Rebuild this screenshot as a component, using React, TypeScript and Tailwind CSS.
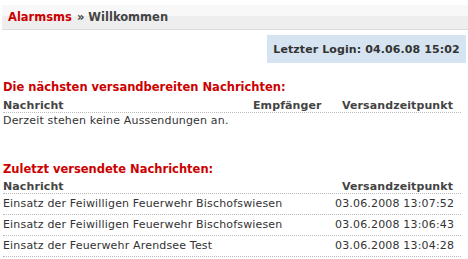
export default function App() {
  const sent = [
    { text: "Einsatz der Feiwilligen Feuerwehr Bischofswiesen", time: "03.06.2008 13:07:52" },
    { text: "Einsatz der Feiwilligen Feuerwehr Bischofswiesen", time: "03.06.2008 13:06:43" },
    { text: "Einsatz der Feuerwehr Arendsee Test", time: "03.06.2008 13:04:28" },
  ];

  return (
    <div className="w-[468px] h-[259px] overflow-hidden bg-white text-[11px] leading-[13px] tracking-[0.17px] text-[#333] font-['DejaVu_Sans',Verdana,sans-serif]">
      {/* Breadcrumb bar */}
      <div className="ml-[2px] mt-[5px] h-[25px] flex items-center pl-[6px] border-b border-[#dcdcdc] bg-[linear-gradient(#f8f8f8_45%,#eeeeee_45%)] font-bold text-[11.5px] tracking-normal">
        <span className="text-[#c00]">Alarmsms</span>
        <span className="text-[#444] ml-[5px]">» Willkommen</span>
      </div>

      {/* Last login */}
      <div className="flex justify-end mt-[5px] pr-[2px]">
        <div className="w-[199px] h-[28px] flex items-center justify-center bg-[#d5e4f0] font-bold text-[#333] tracking-[0.1px]">
          Letzter Login: 04.06.08 15:02
        </div>
      </div>

      <div className="pl-[3px] w-[461px]">
        {/* Upcoming */}
        <h2 className="mt-[17px] text-[11.5px] leading-[14px] tracking-normal font-bold text-[#c00]">
          Die nächsten versandbereiten Nachrichten:
        </h2>
        <div className="mt-[5px] flex font-bold text-[#444] border-b border-dotted border-[#bbb] h-[14px] tracking-[0.1px]">
          <div className="flex-1">Nachricht</div>
          <div className="w-[88px]">Empfänger</div>
          <div className="w-[120px] pl-[1px]">Versandzeitpunkt</div>
        </div>
        <div className="pt-[1px]">Derzeit stehen keine Aussendungen an.</div>

        {/* Sent */}
        <h2 className="mt-[35px] text-[11.5px] leading-[14px] tracking-normal font-bold text-[#c00]">
          Zuletzt versendete Nachrichten:
        </h2>
        <div className="mt-[4px] flex font-bold text-[#444] border-b border-dotted border-[#bbb] h-[14px] tracking-[0.1px]">
          <div className="flex-1">Nachricht</div>
          <div className="w-[120px] pl-[1px]">Versandzeitpunkt</div>
        </div>
        {sent.map((row, i) => (
          <div key={i} className="flex pt-[3px] pb-[3px] leading-[14px] border-b border-dotted border-[#bbb]">
            <div className="flex-1">{row.text}</div>
            <div className="w-[126px]">{row.time}</div>
          </div>
        ))}
      </div>
    </div>
  );
}
